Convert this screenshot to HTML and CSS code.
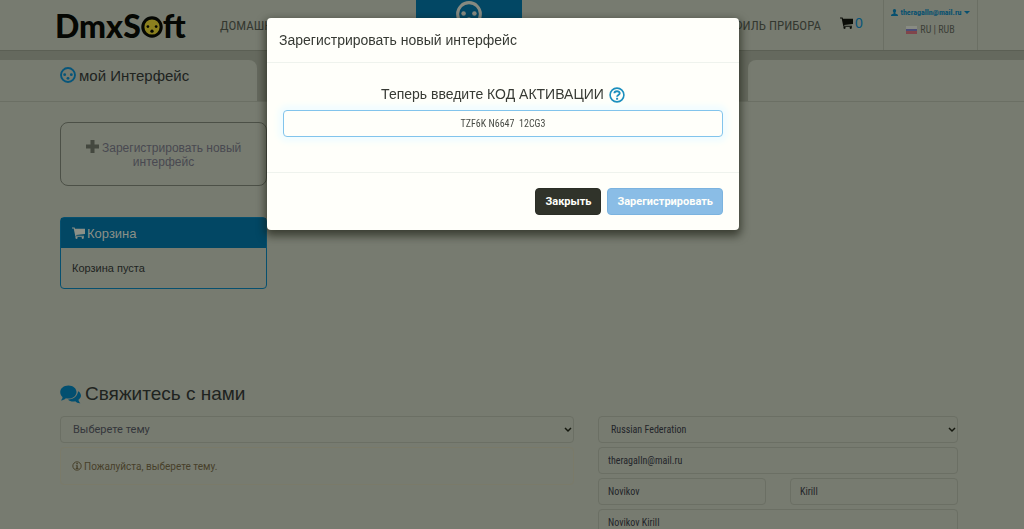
FILE: index.html
```html
<!DOCTYPE html>
<html lang="ru">
<head>
    <meta charset="UTF-8">
    <meta name="viewport" content="width=device-width, initial-scale=1.0">
    <title>DmxSoft</title>
    <link rel="stylesheet" href="styles.css">
</head>
<body>
    <svg class="sprite" aria-hidden="true">
        <symbol id="din" viewBox="0 0 24 24">
            <circle cx="12" cy="12" r="10.5" fill="none" stroke="currentColor" stroke-width="2.8"/>
            <circle cx="7" cy="11.500" r="2.100" fill="currentColor"/>
            <circle cx="17" cy="11.500" r="2.100" fill="currentColor"/>
            <circle cx="12" cy="17" r="2.100" fill="currentColor"/>
        </symbol>
        <symbol id="cart" viewBox="0 0 26 24">
            <path d="M0 1h5.2l.8 2.500H26v10.500L8.4 15.800l.4 1.600H24v2.2H6.8L3.4 3.2H0z" fill="currentColor"/>
            <circle cx="9" cy="21.6" r="2.3" fill="currentColor"/>
            <circle cx="21.500" cy="21.6" r="2.3" fill="currentColor"/>
        </symbol>
    </svg>

    <header class="topbar">
        <a class="logo" href="#">Dm<span class="logo-x">x</span>S<svg viewBox="0 0 24 24" aria-label="o">
            <circle cx="12" cy="12" r="10" fill="#8b801f" stroke="#050703" stroke-width="3.4"/>
            <circle cx="7.5" cy="11.5" r="1.5" fill="#050703"/>
            <circle cx="16.5" cy="11.5" r="1.5" fill="#050703"/>
            <circle cx="12" cy="16.500" r="1.8" fill="#050703"/>
        </svg>ft</a>
        <nav class="nav">
            <a class="nav-link" href="#">ДОМАШНЯЯ</a>
            <a class="nav-tab" href="#" aria-label="мой Интерфейс"><svg><use href="#din"/></svg></a>
            <a class="nav-link nav-last" href="#">ПРОФИЛЬ ПРИБОРА</a>
        </nav>
        <a class="cart-link" href="#"><svg><use href="#cart"/></svg>0</a>
        <div class="account">
            <a class="account-user" href="#">
                <svg viewBox="0 0 14 14"><path d="M7 0c2.2 0 3.2 1.6 3.2 3.6S9 7 8.6 7.6v1.6l4.6 2q.8.5.8 2.8H0q0-2.300.8-2.800l4.600-2V7.600C5 7 3.800 5.600 3.800 3.600S4.800 0 7 0z" fill="currentColor"/></svg>
                theragalln@mail.ru
                <span class="caret"></span>
            </a>
            <a class="account-lang" href="#"><span class="flag"></span>RU | RUB</a>
        </div>
    </header>

    <div class="subhead">
        <div class="subhead-title">
            <svg><use href="#din"/></svg>
            <h1>мой Интерфейс</h1>
        </div>
        <div class="subhead-right"></div>
    </div>

    <main class="container">
        <aside class="side">
            <a class="add-interface" href="#">
                <svg viewBox="0 0 13 13"><path d="M4.500 0h4v4.500H13v4H8.500V13h-4V8.500H0v-4h4.500z" fill="#44483f"/></svg>
                Зарегистрировать новый интерфейс
            </a>
            <section class="panel">
                <h2 class="panel-heading"><svg><use href="#cart"/></svg>Корзина</h2>
                <p class="panel-body">Корзина пуста</p>
            </section>
        </aside>

        <section class="contact">
            <h2 class="contact-title">
                <svg viewBox="0 0 22 20">
                    <path d="M19 6.500c4 2 4 7 .4 9 .2 1.500.8 2.500 2 3.700-2.400.2-4-.6-5.400-2-3 .6-6-.1-7.600-2C15 15 18.500 11 19 6.500z" fill="currentColor"/>
                    <path d="M8.800.4c4.800 0 8.500 3 8.500 6.900s-3.700 7-8.500 7q-1.500 0-2.700-.3C4.600 15.500 3 16.200 1 16.200c1-1.200 1.600-2.200 1.600-3.600C1 11.300.2 9.400.2 7.300.2 3.400 4 .4 8.800.4z" fill="currentColor"/>
                </svg>
                Свяжитесь с нами
            </h2>
            <form class="contact-form">
                <div class="column">
                    <div class="select">
                        <select class="field" aria-label="Тема"><option>Выберете тему</option></select>
                        <svg viewBox="0 0 8 6"><path d="M1 1l3 3 3-3" fill="none" stroke="#15180f" stroke-width="1.500"/></svg>
                    </div>
                    <div class="alert">
                        <svg viewBox="0 0 12 12"><circle cx="6" cy="6" r="5" fill="none" stroke="currentColor" stroke-width="1.200"/><path d="M5.200 2.500h1.800v1.500H5.200zM4.600 5h2.300v3.300h.8v1.200H4.500V8.300h.8V6h-.7z" fill="currentColor"/></svg>
                        Пожалуйста, выберете тему.
                    </div>
                </div>
                <div class="column">
                    <div class="select">
                        <select class="field latin" aria-label="Страна"><option>Russian Federation</option></select>
                        <svg viewBox="0 0 8 6"><path d="M1 1l3 3 3-3" fill="none" stroke="#15180f" stroke-width="1.500"/></svg>
                    </div>
                    <input class="field latin" type="email" aria-label="Email" value="theragalln@mail.ru">
                    <div class="names">
                        <input class="field latin" type="text" aria-label="Фамилия" value="Novikov">
                        <input class="field latin" type="text" aria-label="Имя" value="Kirill">
                    </div>
                    <input class="field latin" type="text" aria-label="Полное имя" value="Novikov Kirill">
                </div>
            </form>
        </section>
    </main>

    <div class="modal-wrap">
        <div class="modal" role="dialog" aria-labelledby="modal-title">
            <h4 class="modal-header" id="modal-title">Зарегистрировать новый интерфейс</h4>
            <div class="modal-body">
                <label for="code">Теперь введите КОД АКТИВАЦИИ
                    <svg viewBox="0 0 16 16"><circle cx="8" cy="8" r="6.900" fill="none" stroke="currentColor" stroke-width="1.600"/><path d="M5.400 6.200C5.400 3.600 10.700 3.500 10.700 6.300 10.700 8 8.100 8 8.100 9.700" fill="none" stroke="currentColor" stroke-width="1.900"/><path d="M7.100 10.800H9.100v1.900H7.100z" fill="currentColor"/></svg>
                </label>
                <input class="code latin" id="code" type="text" value="TZF6K N6647  12CG3">
            </div>
            <div class="modal-footer">
                <button class="btn btn-dark" type="button">Закрыть</button>
                <button class="btn btn-primary" type="button">Зарегистрировать</button>
            </div>
        </div>
    </div>
</body>
</html>
```

FILE: styles.css
```css
* {
    box-sizing: border-box;
}

body {
    margin: 0;
    height: 100vh;
    overflow: hidden;
    background: #777b70;
    color: #20231f;
    font-family: "Liberation Sans", Arial, sans-serif;
    font-size: 11px;
}

a {
    color: inherit;
    text-decoration: none;
}

h1, h2, h4, p {
    margin: 0;
    font-weight: normal;
}

svg {
    flex: none;
}

.sprite {
    display: none;
}

.latin {
    font-family: "Roboto Condensed", Roboto, sans-serif;
}

/* top bar */
.topbar {
    display: flex;
    height: 51px;
    padding: 0 46px 0 55px;
    border-bottom: 1px solid #5b5f54;
}

.logo {
    display: flex;
    align-items: center;
    width: 165px;
    color: #050703;
    font-family: Lato, sans-serif;
    font-size: 32px;
    font-weight: 900;
}

.logo svg {
    width: 22px;
    height: 22px;
    margin-top: 4px;
}

.logo-x {
    background: radial-gradient(circle at 50% 58%, #8b801f 3px, transparent 4px);
}

.nav {
    display: flex;
    flex: 1;
    align-items: center;
    color: #343830;
    font-family: "Roboto Condensed", Roboto, sans-serif;
    font-size: 13px;
}

.nav-link {
    width: 196px;
}

.nav-tab {
    width: 106px;
    height: 50px;
    background: #024764;
    color: #858980;
    text-align: center;
}

.nav-tab svg {
    width: 26px;
    height: 26px;
    margin-top: 1px;
}

.nav-last {
    flex: 1;
    text-align: right;
}

.cart-link {
    display: flex;
    align-items: center;
    gap: 2px;
    width: 62px;
    padding: 0 0 5px 19px;
    color: #07557a;
    font-size: 14px;
}

.cart-link svg {
    width: 13px;
    height: 12px;
    color: #0a0c07;
}

.account {
    display: flex;
    flex-direction: column;
    align-items: center;
    gap: 6px;
    width: 95px;
    padding-top: 7px;
    border: 1px solid #6b6f64;
    border-width: 0 1px;
    font-family: "Roboto Condensed", Roboto, sans-serif;
    line-height: 11px;
}

.account-user {
    display: flex;
    align-items: center;
    gap: 2px;
    color: #07506f;
    font-size: 8px;
    font-weight: bold;
}

.account-user svg {
    width: 7px;
    height: 7px;
}

.caret {
    border: 3px solid transparent;
    border-top-color: #07506f;
    border-bottom: 0;
}

.account-lang {
    display: flex;
    align-items: center;
    gap: 3px;
    color: #3c4038;
    font-size: 10px;
}

.flag {
    width: 11px;
    height: 8px;
    background: linear-gradient(#888b83 33%, #4b4d77 33% 66%, #80454b 66%);
}

/* page heading strip */
.subhead {
    display: grid;
    grid-template-columns: 258fr 277fr;
    column-gap: 48%;
    height: 51px;
    padding-top: 9px;
    background: #65695e;
    border-bottom: 1px solid #6b6f64;
}

.subhead-title,
.subhead-right {
    background: #777b70;
}

.subhead-title {
    display: flex;
    align-items: flex-start;
    gap: 3px;
    padding: 7px 0 0 60px;
    border-radius: 0 8px 0 0;
}

.subhead-title svg {
    width: 16px;
    height: 16px;
    color: #07557a;
}

.subhead-title h1 {
    font-size: 15px;
    line-height: 18px;
    white-space: nowrap;
}

.subhead-right {
    border-radius: 8px 0 0 0;
}

/* content */
.container {
    padding: 20px 66px 0 60px;
}

.side {
    width: 23%;
    min-width: 207px;
}

.add-interface {
    display: block;
    padding: 17px 12px 16px;
    border: 1px solid #4c5047;
    border-radius: 8px;
    color: #494951;
    font-size: 12px;
    line-height: 14px;
    text-align: center;
}

.add-interface svg {
    width: 13px;
    height: 13px;
    vertical-align: -1px;
}

.panel {
    margin-top: 31px;
    border: 1px solid #07506f;
    border-radius: 4px;
}

.panel-heading {
    display: flex;
    align-items: center;
    gap: 2px;
    height: 30px;
    padding-left: 11px;
    background: #024764;
    color: #8c9087;
    font-size: 13px;
}

.panel-heading svg {
    width: 13px;
    height: 12px;
}

.panel-body {
    padding: 12px 11px;
    line-height: 16px;
}

.contact {
    padding-top: 93px;
}

.contact-title {
    display: flex;
    align-items: center;
    gap: 4px;
    height: 24px;
    margin-bottom: 10px;
    font-size: 19px;
}

.contact-title svg {
    width: 21px;
    height: 19px;
    color: #024f70;
}

.contact-form {
    display: grid;
    grid-template-columns: 514fr 360fr;
    gap: 24px;
}

.column {
    display: flex;
    flex-direction: column;
    gap: 4px;
    min-width: 0;
}

.field {
    display: block;
    width: 100%;
    height: 27px;
    padding: 0 9px;
    border: 1px solid #6b6f64;
    border-radius: 4px;
    background: transparent;
    color: #23252a;
    font-size: 10px;
}

.select {
    position: relative;
}

.select .field {
    padding: 0 12px;
    appearance: none;
}

.select .field:not(.latin) {
    font-family: Roboto, sans-serif;
    color: #34363b;
    font-size: 11px;
}

.select svg {
    position: absolute;
    top: 11px;
    right: 2px;
    width: 8px;
    height: 6px;
}

.names {
    display: grid;
    grid-template-columns: 1fr 1fr;
    gap: 24px;
}

.alert {
    display: flex;
    align-items: center;
    gap: 2px;
    height: 38px;
    padding-left: 11px;
    border: 1px solid #7a7a69;
    border-radius: 4px;
    color: #47402a;
    font-family: Roboto, sans-serif;
    font-size: 10px;
}

.alert svg {
    width: 10px;
    height: 10px;
}

/* modal */
.modal-wrap {
    position: fixed;
    inset: 0;
    padding: 18px 18px 0 0;
}

.modal {
    max-width: 472px;
    margin: 0 auto;
    border-radius: 4px;
    background: #fffffa;
    color: #373a34;
    box-shadow: 0 4px 8px 2px rgba(20, 24, 12, 0.6);
}

.modal-header {
    padding: 13px 12px;
    border-bottom: 1px solid #eff3ed;
    font-size: 14px;
    line-height: 18px;
}

.modal-body {
    padding: 22px 16px 35px;
    border-bottom: 1px solid #eff3ed;
}

.modal-body label {
    display: flex;
    align-items: center;
    justify-content: center;
    gap: 5px;
    margin-bottom: 6px;
    font-size: 14px;
    line-height: 19px;
}

.modal-body label svg {
    width: 16px;
    height: 16px;
    color: #1c8fbe;
}

.code {
    display: block;
    width: 100%;
    height: 27px;
    border: 1px solid #82c4ec;
    border-radius: 4px;
    outline: 0;
    background: #fffffa;
    box-shadow: 0 0 6px 5px #f1fdff;
    color: #484b45;
    font-size: 10px;
    text-align: center;
    white-space: pre;
}

.modal-footer {
    display: flex;
    justify-content: flex-end;
    gap: 6px;
    padding: 15px 16px;
}

.btn {
    height: 27px;
    padding: 0 9px;
    border: 1px solid #2b2e26;
    border-radius: 4px;
    color: #fffffa;
    font-family: Roboto, sans-serif;
    font-size: 11px;
    font-weight: bold;
}

.btn-dark {
    background: #30332a;
}

.btn-primary {
    border-color: #7bb3df;
    background: #8abde6;
}
```
